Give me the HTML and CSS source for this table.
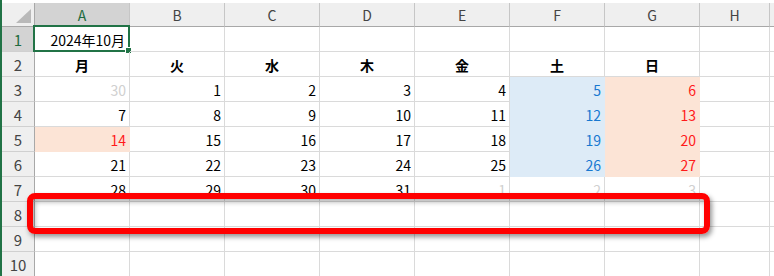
FILE: index.html
```html
<!DOCTYPE html>
<html lang="ja">
<head>
<meta charset="utf-8">
<title>2024年10月</title>
<link rel="stylesheet" href="styles.css">
</head>
<body>
<div class="sheet">
  <div class="hd corner"><span class="tri"></span></div>
  <div class="hd col sel">A</div>
  <div class="hd col">B</div>
  <div class="hd col">C</div>
  <div class="hd col">D</div>
  <div class="hd col">E</div>
  <div class="hd col">F</div>
  <div class="hd col">G</div>
  <div class="hd col">H</div>
  <div class="hd col last"></div>

  <div class="hd row sel">1</div>
  <div class="c r a1">2024年10月<span class="selbox"><span class="handle"></span></span></div>
  <div class="c"></div><div class="c"></div><div class="c"></div><div class="c"></div><div class="c"></div><div class="c"></div><div class="c"></div><div class="c"></div>

  <div class="hd row">2</div>
  <div class="c d">月</div><div class="c d">火</div><div class="c d">水</div><div class="c d">木</div><div class="c d">金</div><div class="c d">土</div><div class="c d">日</div><div class="c"></div><div class="c"></div>

  <div class="hd row">3</div>
  <div class="c r g">30</div><div class="c r">1</div><div class="c r">2</div><div class="c r">3</div><div class="c r">4</div><div class="c r blue">5</div><div class="c r pink">6</div><div class="c"></div><div class="c"></div>

  <div class="hd row">4</div>
  <div class="c r">7</div><div class="c r">8</div><div class="c r">9</div><div class="c r">10</div><div class="c r">11</div><div class="c r blue">12</div><div class="c r pink">13</div><div class="c"></div><div class="c"></div>

  <div class="hd row">5</div>
  <div class="c r pink">14</div><div class="c r">15</div><div class="c r">16</div><div class="c r">17</div><div class="c r">18</div><div class="c r blue">19</div><div class="c r pink">20</div><div class="c"></div><div class="c"></div>

  <div class="hd row">6</div>
  <div class="c r">21</div><div class="c r">22</div><div class="c r">23</div><div class="c r">24</div><div class="c r">25</div><div class="c r blue">26</div><div class="c r pink">27</div><div class="c"></div><div class="c"></div>

  <div class="hd row">7</div>
  <div class="c r">28</div><div class="c r">29</div><div class="c r">30</div><div class="c r">31</div><div class="c r g">1</div><div class="c r g">2</div><div class="c r g">3</div><div class="c"></div><div class="c"></div>

  <div class="hd row">8</div>
  <div class="c"></div><div class="c"></div><div class="c"></div><div class="c"></div><div class="c"></div><div class="c"></div><div class="c"></div><div class="c"></div><div class="c"></div>

  <div class="hd row">9</div>
  <div class="c"></div><div class="c"></div><div class="c"></div><div class="c"></div><div class="c"></div><div class="c"></div><div class="c"></div><div class="c"></div><div class="c"></div>

  <div class="hd row">10</div>
  <div class="c"></div><div class="c"></div><div class="c"></div><div class="c"></div><div class="c"></div><div class="c"></div><div class="c"></div><div class="c"></div><div class="c"></div>
</div>
<div class="mark"></div>
</body>
</html>
```
FILE: styles.css
```css
html, body {
  margin: 0;
  padding: 0;
  background: #ffffff;
}
body {
  position: relative;
  height: 276px;
  overflow: hidden;
  border-left: 2px solid #217346;
  font-family: "Noto Sans CJK JP", "Noto Sans", sans-serif;
  color: #000000;
}
.sheet {
  margin-top: 3px;
  display: grid;
  grid-template-columns: 33px repeat(7, 95px) 70px 1fr;
  grid-template-rows: 24px repeat(10, 25px);
}
.hd {
  box-sizing: border-box;
  background: #efefef;
  color: #444444;
  font-size: 14px;
  display: flex;
  align-items: center;
  justify-content: center;
  line-height: 1;
}
.col {
  border-right: 1px solid #c6c6c6;
  border-bottom: 1px solid #a8a8a8;
}
.col.last {
  border-right: none;
}
.row {
  border-right: 1px solid #a8a8a8;
  border-bottom: 1px solid #d0d0d0;
  font-size: 15px;
}
.hd.sel {
  background: #d3d3d3;
  color: #1e6b40;
}
.corner {
  position: relative;
  border-right: 1px solid #a8a8a8;
  border-bottom: 1px solid #a8a8a8;
}
.tri {
  position: absolute;
  right: 3px;
  bottom: 3px;
  width: 15px;
  height: 14px;
  background: #b9b9b9;
  clip-path: polygon(100% 0, 100% 100%, 0 100%);
}
.c {
  box-sizing: border-box;
  border-right: 1px solid #dadada;
  border-bottom: 1px solid #dadada;
  font-size: 14px;
  line-height: 1;
  display: flex;
  align-items: center;
  padding: 2px 3px 0 3px;
  white-space: nowrap;
  position: relative;
}
.r {
  justify-content: flex-end;
}
.d {
  justify-content: center;
  font-weight: bold;
}
.g {
  color: #d0d0d0;
}
.blue {
  background: #ddebf7;
  border-color: #ddebf7;
  color: #1878d0;
}
.pink {
  background: #fce4d6;
  border-color: #fce4d6;
  color: #ff1a1a;
}
.a1 {
  padding-right: 4px;
}
.selbox {
  position: absolute;
  left: -2px;
  top: -2px;
  right: -1px;
  bottom: -1px;
  border: 2px solid #217346;
}
.handle {
  position: absolute;
  right: -4px;
  bottom: -4px;
  width: 5px;
  height: 5px;
  background: #217346;
  border: 1px solid #ffffff;
}
.mark {
  position: absolute;
  left: 25px;
  top: 193px;
  width: 683px;
  height: 41px;
  box-sizing: border-box;
  border: 6px solid #ff0000;
  border-radius: 8px;
  box-shadow: 2px 3px 5px rgba(0, 0, 0, 0.42), inset 2px 3px 5px rgba(0, 0, 0, 0.3);
}
```
